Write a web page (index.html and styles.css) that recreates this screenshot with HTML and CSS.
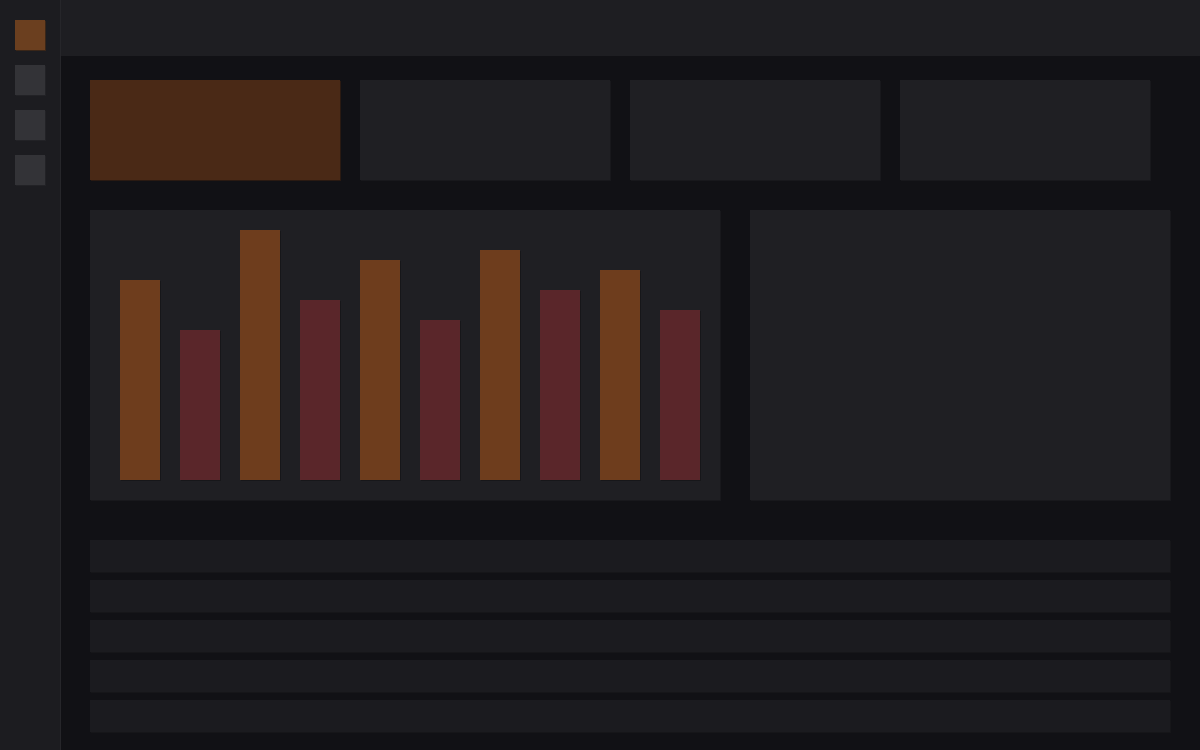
FILE: index.html
```html
<!DOCTYPE html>
<html lang="en">
<head>
  <meta charset="UTF-8">
  <title>Dashboard</title>
  <meta name="viewport" content="width=device-width, initial-scale=1.0">
  <link rel="stylesheet" href="styles.css">
</head>
<body>

  <aside class="sidebar">
    <div class="nav-item active"></div>
    <div class="nav-item"></div>
    <div class="nav-item"></div>
    <div class="nav-item"></div>
  </aside>

  <div class="main">
    <header class="topbar"></header>

    <div class="content">
      <div class="stats">
        <div class="stat highlight"></div>
        <div class="stat"></div>
        <div class="stat"></div>
        <div class="stat"></div>
      </div>

      <div class="panels">
        <div class="panel chart">
          <div class="bar warm" style="height:200px"></div>
          <div class="bar cool" style="height:150px"></div>
          <div class="bar warm" style="height:250px"></div>
          <div class="bar cool" style="height:180px"></div>
          <div class="bar warm" style="height:220px"></div>
          <div class="bar cool" style="height:160px"></div>
          <div class="bar warm" style="height:230px"></div>
          <div class="bar cool" style="height:190px"></div>
          <div class="bar warm" style="height:210px"></div>
          <div class="bar cool" style="height:170px"></div>
        </div>
        <div class="panel side"></div>
      </div>

      <div class="rows">
        <div class="row"></div>
        <div class="row"></div>
        <div class="row"></div>
        <div class="row"></div>
        <div class="row"></div>
      </div>
    </div>
  </div>

</body>
</html>
```

FILE: styles.css
```css
body {
  margin: 0;
  height: 750px;
  display: flex;
  background: #111115;
  font-family: "Liberation Sans", sans-serif;
  overflow: hidden;
}

.sidebar {
  width: 60px;
  flex-shrink: 0;
  background: #1c1c20;
  border-right: 1px solid #26262a;
  padding-top: 20px;
  display: flex;
  flex-direction: column;
  align-items: center;
  gap: 15px;
}

.nav-item {
  width: 30px;
  height: 30px;
  background: #333337;
  box-shadow: 1px 1px 0 #222226;
}

.nav-item.active {
  background: #6b3f1f;
  box-shadow: 1px 1px 0 #3a2618;
}

.main {
  flex: 1;
  display: flex;
  flex-direction: column;
}

.topbar {
  height: 56px;
  background: #1e1e22;
}

.content {
  padding: 24px 30px 0 29px;
}

.stats {
  display: flex;
  gap: 20px;
  margin-bottom: 30px;
}

.stat {
  width: 250px;
  height: 100px;
  background: #1f1f23;
  box-shadow: 1px 1px 0 #18181c;
}

.stat.highlight {
  background: #4a2916;
  box-shadow: 1px 1px 0 #2a1a12;
}

.panels {
  display: flex;
  gap: 30px;
  height: 290px;
  margin-bottom: 40px;
}

.panel {
  background: #1f1f23;
  box-shadow: 1px 1px 0 #18181c;
}

.chart {
  width: 630px;
  box-sizing: border-box;
  padding: 20px 20px 20px 30px;
  display: flex;
  align-items: flex-end;
  gap: 20px;
}

.side {
  flex: 1;
}

.bar {
  width: 40px;
  box-shadow: 1px 1px 0 #17171a;
}

.bar.warm {
  background: #6e3d1d;
}

.bar.cool {
  background: #5a262a;
}

.rows {
  display: flex;
  flex-direction: column;
  gap: 8px;
}

.row {
  height: 32px;
  background: #1b1b1f;
  box-shadow: 1px 1px 0 #161619;
}
```
